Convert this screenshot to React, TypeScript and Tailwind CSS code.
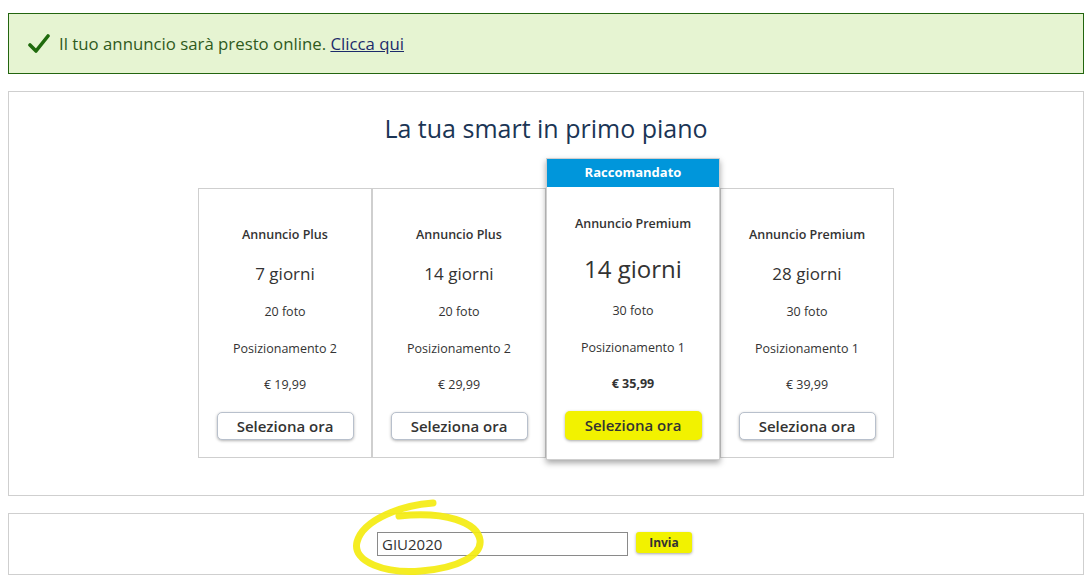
import React from "react";

type Plan = {
  name: string;
  days: string;
  photos: string;
  position: string;
  price: string;
  featured?: boolean;
};

const plans: Plan[] = [
  { name: "Annuncio Plus", days: "7 giorni", photos: "20 foto", position: "Posizionamento 2", price: "€ 19,99" },
  { name: "Annuncio Plus", days: "14 giorni", photos: "20 foto", position: "Posizionamento 2", price: "€ 29,99" },
  {
    name: "Annuncio Premium",
    days: "14 giorni",
    photos: "30 foto",
    position: "Posizionamento 1",
    price: "€ 35,99",
    featured: true,
  },
  { name: "Annuncio Premium", days: "28 giorni", photos: "30 foto", position: "Posizionamento 1", price: "€ 39,99" },
];

function PlanCard({ plan }: { plan: Plan }) {
  if (plan.featured) {
    return (
      <div className="relative z-10 flex w-[174px] flex-col border border-[#cfcfcf] bg-white pb-[19px] shadow-[0_3px_6px_rgba(0,0,0,0.35)]">
        <div className="flex h-[28px] items-center justify-center bg-[#0096db] text-[13px] font-bold text-white">
          Raccomandato
        </div>
        <div className="mt-[27px] flex h-[20px] items-center justify-center text-[12.5px] font-semibold text-[#333]">
          {plan.name}
        </div>
        <div className="mt-[20px] flex h-[30px] items-center justify-center text-[24px] text-[#333]">
          {plan.days}
        </div>
        <div className="mt-[17px] flex h-[20px] items-center justify-center text-[12.5px] text-[#333]">
          {plan.photos}
        </div>
        <div className="mt-[17px] flex h-[20px] items-center justify-center text-[12.5px] text-[#333]">
          {plan.position}
        </div>
        <div className="mt-[16px] flex h-[20px] items-center justify-center text-[12.5px] font-bold text-[#333]">
          {plan.price}
        </div>
        <div className="mt-[17px] flex justify-center">
          <button
            type="button"
            className="h-[29px] w-[137px] rounded-[5px] bg-[#f2f200] text-[15px] font-semibold text-[#333] shadow-[0_1px_3px_rgba(0,0,0,0.35)]"
          >
            Seleziona ora
          </button>
        </div>
      </div>
    );
  }
  return (
    <div className="mt-[30px] flex w-[174px] flex-col border border-[#cfcfcf] bg-white pb-[17px] pt-[36px]">
      <div className="flex h-[20px] items-center justify-center text-[12.5px] font-semibold text-[#333]">
        {plan.name}
      </div>
      <div className="mt-[17px] flex h-[24px] items-center justify-center text-[17px] text-[#333]">
        {plan.days}
      </div>
      <div className="mt-[16px] flex h-[20px] items-center justify-center text-[12.5px] text-[#333]">
        {plan.photos}
      </div>
      <div className="mt-[17px] flex h-[20px] items-center justify-center text-[12.5px] text-[#333]">
        {plan.position}
      </div>
      <div className="mt-[16px] flex h-[20px] items-center justify-center text-[12.5px] text-[#333]">
        {plan.price}
      </div>
      <div className="mt-[17px] flex justify-center">
        <button
          type="button"
          className="h-[28px] w-[137px] rounded-[5px] border border-[#b8c0cc] bg-white text-[15px] font-semibold text-[#333] shadow-[0_1px_3px_rgba(0,0,0,0.3)]"
        >
          Seleziona ora
        </button>
      </div>
    </div>
  );
}

export default function App() {
  return (
    <div className="min-h-[583px] bg-white px-[8px] pt-[13px] font-['Open_Sans',sans-serif]">
      {/* success banner */}
      <div className="flex h-[61px] items-center border border-[#23650f] bg-[#e6f4d2] pl-[19px]">
        <svg width="22" height="20" viewBox="0 0 22 20" className="mr-[9px]" aria-hidden>
          <path d="M2 11 L8 17 L20 2" fill="none" stroke="#1f6a0d" strokeWidth="3.6" strokeLinecap="round" strokeLinejoin="round" />
        </svg>
        <span className="text-[16.8px] text-[#2f5a1c]">
          Il tuo annuncio sarà presto online.{" "}
          <a href="#" className="text-[#1c2b6b] underline">
            Clicca qui
          </a>
        </span>
      </div>

      {/* plans */}
      <div className="mt-[17px] border border-[#cfcfcf] bg-white pb-[35px] pt-[21px]">
        <h1 className="h-[30px] text-center text-[25px] leading-[30px] text-[#1b3555]">
          La tua smart in primo piano
        </h1>
        <div className="mt-[15px] flex items-start justify-center">
          {plans.map((p, i) => (
            <PlanCard key={i} plan={p} />
          ))}
        </div>
      </div>

      {/* promo code */}
      <div className="relative mt-[17px] flex h-[62px] items-center justify-center border border-[#cfcfcf] bg-white pr-[23px]">
        <div className="relative flex items-center">
          <input
            readOnly
            value="GIU2020"
            className="h-[24px] w-[251px] border border-[#8a8a8a] px-[4px] text-[15px] text-[#333] outline-none"
          />
          <button
            type="button"
            className="ml-[8px] h-[21px] w-[56px] self-start rounded-[3px] bg-[#f2f200] text-[12px] font-bold text-[#333] shadow-[0_1px_3px_rgba(0,0,0,0.35)]"
          >
            Invia
          </button>
          <svg
            className="pointer-events-none absolute left-[-26px] top-[-34px]"
            width="140"
            height="82"
            viewBox="350 499 140 82"
            aria-hidden
          >
            <path
              d="M432 504 C402 506 362 520 356 543 C351 563 385 575 420 572 C458 569 481 556 479 541 C476 523 444 512 398 517"
              fill="none"
              stroke="#f4ec10"
              strokeWidth="7"
              strokeLinecap="round"
              opacity="0.92"
            />
          </svg>
        </div>
      </div>
    </div>
  );
}
